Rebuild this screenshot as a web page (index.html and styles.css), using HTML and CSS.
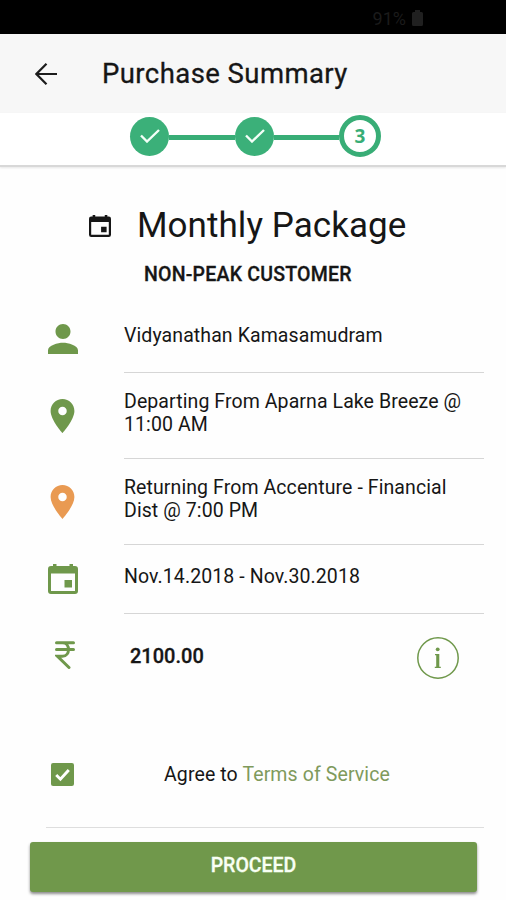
FILE: index.html
```
<!DOCTYPE html>
<html lang="en">
<head>
<meta charset="utf-8">
<title>Purchase Summary</title>
<link rel="stylesheet" href="styles.css">
</head>
<body>
<div class="status"><span class="status-level">91%</span>
  <svg class="battery" viewBox="0 0 11 16"><path d="M3 0h5v2h1.500a1.500 1.500 0 0 1 1.500 1.500V14.500a1.500 1.500 0 0 1-1.500 1.500h-8A1.500 1.500 0 0 1 0 14.500V3.500A1.500 1.500 0 0 1 1.500 2H3z"/></svg>
</div>
<header class="header">
  <svg class="back" viewBox="0 0 22 22"><path d="M11.500 0.800L1.400 11l10.100 10.200M1.400 11H22"/></svg>
  <h1 class="header-title">Purchase Summary</h1>
</header>
<nav class="stepper">
  <span class="step"><svg class="step-check" viewBox="0 0 20 14"><path d="M1 6.500L7 12.500L19 1"/></svg></span>
  <span class="bar"></span>
  <span class="step"><svg class="step-check" viewBox="0 0 20 14"><path d="M1 6.500L7 12.500L19 1"/></svg></span>
  <span class="bar bar-last"></span>
  <span class="step step-current">3</span>
</nav>
<main class="content">
  <div class="package">
    <svg class="package-icon" viewBox="0 0 30 30"><path fill-rule="evenodd" d="M5 0h3.500v2h13V0H25v2h2a3 3 0 0 1 3 3v22a3 3 0 0 1-3 3H3a3 3 0 0 1-3-3V5a3 3 0 0 1 3-3h2zM3 9.500V27h24V9.500zM16.500 16H24v7.500h-7.500z"/></svg>
    <h2 class="package-name">Monthly Package</h2>
  </div>
  <p class="customer">NON-PEAK CUSTOMER</p>
  <ul class="rows">
    <li class="row row-person">
      <span class="icon"><svg class="i30" viewBox="4 4 16 16"><path d="M12 12c2.210 0 4-1.790 4-4s-1.790-4-4-4-4 1.790-4 4 1.790 4 4 4zm0 2c-2.670 0-8 1.340-8 4v2h16v-2c0-2.660-5.330-4-8-4z"/></svg></span>
      <span class="text name">Vidyanathan Kamasamudram</span>
    </li>
    <li class="row row-place">
      <span class="icon"><svg class="pin" viewBox="5 2 14 20"><path d="M12 2C8.130 2 5 5.130 5 9c0 5.250 7 13 7 13s7-7.750 7-13c0-3.870-3.130-7-7-7zm0 9.500c-1.380 0-2.500-1.120-2.500-2.500s1.120-2.500 2.500-2.500 2.500 1.120 2.500 2.500-1.120 2.500-2.500 2.500z"/></svg></span>
      <span class="text depart">Departing From Aparna Lake Breeze @<br>11:00 AM</span>
    </li>
    <li class="row row-place">
      <span class="icon"><svg class="pin pin-return" viewBox="5 2 14 20"><path d="M12 2C8.130 2 5 5.130 5 9c0 5.250 7 13 7 13s7-7.750 7-13c0-3.870-3.130-7-7-7zm0 9.500c-1.380 0-2.500-1.120-2.500-2.500s1.120-2.500 2.500-2.500 2.500 1.120 2.500 2.500-1.120 2.500-2.500 2.500z"/></svg></span>
      <span class="text return">Returning From Accenture - Financial<br>Dist @ 7:00 PM</span>
    </li>
    <li class="row row-date">
      <span class="icon"><svg class="i30" viewBox="0 0 30 30"><path fill-rule="evenodd" d="M5 0h3.500v2h13V0H25v2h2a3 3 0 0 1 3 3v22a3 3 0 0 1-3 3H3a3 3 0 0 1-3-3V5a3 3 0 0 1 3-3h2zM3 9.500V27h24V9.500zM16.500 16H24v7.500h-7.500z"/></svg></span>
      <span class="text date">Nov.14.2018 - Nov.30.2018</span>
    </li>
  </ul>
  <div class="price">
    <svg class="rupee" viewBox="0 0 20 28"><path d="M1.500 1.800h17M1.500 8.500h17M2.500 1.800h5c8 0 8 13.500 0 13.500H2.500L14 26.500"/></svg>
    <span class="amount">2100.00</span>
    <svg class="info" viewBox="0 0 42 42"><circle class="info-ring" cx="21" cy="21" r="20.200"/><circle cx="20.700" cy="12.300" r="1.900"/><path d="M18 17h4.300v12.800h1.500v1.200h-6v-1.200h1.400V18.200H18z"/></svg>
  </div>
  <div class="agree">
    <svg class="checkbox" viewBox="0 0 22 22"><rect width="22" height="22" rx="2"/><path d="M5 11.500l4 4 8-8.800"/></svg>
    <span class="agree-text">Agree to <span class="terms">Terms of Service</span></span>
  </div>
  <button class="proceed">PROCEED</button>
</main>
</body>
</html>
```

FILE: styles.css
```
* { box-sizing: border-box; }
body { margin: 0; height: 900px; overflow: hidden; background: #fefefe; color: #161616; font-family: Roboto, sans-serif; }
h1, h2, p, ul { margin: 0; padding: 0; font-weight: 400; }
svg { display: block; flex: none; fill: #6f984b; }

.status { height: 34px; padding: 2px 83px 0 0; display: flex; align-items: center; justify-content: flex-end; gap: 6px; background: #000; color: #1b1b1b; font-size: 18px; }
.status .battery { width: 11px; height: 16px; fill: #202020; }

.header { height: 79px; display: flex; align-items: center; padding-left: 35px; background: #f7f7f7; }
.back { width: 22px; height: 22px; fill: none; stroke: #1c1c1c; stroke-width: 2.200; }
.header-title { margin-left: 45px; padding-top: 1px; font-size: 27.500px; line-height: 32px; letter-spacing: 0.430px; white-space: nowrap; -webkit-text-stroke: 0.300px #161616; }

.stepper { height: 54px; padding: 0 0 6px 130px; display: flex; align-items: center; background: #fff; border-bottom: 2px solid #d8d8d8; box-shadow: 0 1px 2px #e6e6e6; }
.step { width: 39px; height: 39px; flex: none; border-radius: 50%; background: #3bb079; display: flex; align-items: center; justify-content: center; }
.step-check { width: 20px; height: 14px; fill: none; stroke: #f4fff8; stroke-width: 2.400; }
.bar { width: 66px; height: 5px; margin-top: 3px; background: #38ad76; }
.bar-last { width: 65px; }
.step-current { width: 42px; height: 42px; border: 5px solid #38ad76; background: #fff; color: #38ad76; font: 700 19px "Open Sans", sans-serif; }

.content { padding: 33px 22px 0 46px; }
.package { height: 50px; display: flex; align-items: center; padding-left: 43px; }
.package-icon { width: 22px; height: 22px; margin-top: 2px; fill: #161616; }
.package-name { margin-left: 26px; padding-top: 1px; font-size: 35px; line-height: 42px; letter-spacing: 0.050px; white-space: nowrap; }
.customer { margin: 14px 0 0 98px; font-size: 19.500px; line-height: 22px; font-weight: 500; letter-spacing: 0.220px; -webkit-text-stroke: 0.300px #161616; white-space: nowrap; }

.rows { list-style: none; margin-top: 16px; }
.row { display: flex; }
.icon { width: 33px; margin-right: 45px; display: flex; justify-content: center; align-items: center; }
.i30 { width: 30px; height: 30px; }
.row-person .i30 { margin-top: 2px; }
.row-date .i30 { margin-top: -1px; }
.pin { width: 25px; height: 34px; }
.pin-return { fill: #e99a52; }
.text { flex: 1; border-bottom: 1px solid #d6d6d6; font-size: 19.500px; line-height: 22.500px; letter-spacing: 0.090px; white-space: nowrap; }
.row-person { height: 71px; }
.name { padding-top: 23px; }
.row-place { height: 86px; }
.depart, .return { padding-top: 18px; }
.row-date { height: 69px; }
.date { padding-top: 21px; }

.price { height: 88px; display: flex; align-items: center; padding: 0 25px 0 9px; }
.rupee { width: 20px; height: 28px; margin-top: -6px; fill: none; stroke: #6f984b; stroke-width: 3; stroke-linecap: round; }
.amount { margin: -4px 0 0 55px; font-size: 20px; font-weight: 500; -webkit-text-stroke: 0.300px #161616; }
.info { width: 42px; height: 42px; margin-left: auto; }
.info-ring { fill: none; stroke: #6f984b; stroke-width: 1.500; }

.agree { height: 126px; padding: 20px 0 0 5px; display: flex; align-items: center; border-bottom: 1px solid #dedede; }
.checkbox { width: 23px; height: 23px; }
.checkbox path { fill: none; stroke: #fff; stroke-width: 2.800; }
.agree-text { margin-left: 90px; font-size: 19.500px; letter-spacing: 0.110px; white-space: nowrap; }
.terms { color: #7f9a5c; }

.proceed { display: block; width: 447px; height: 50px; margin: 14px 0 0 -16px; padding: 0 0 3px; border: 0; border-radius: 3px; background: #70984b; color: #f8fff4; box-shadow: 0 2px 3px #8c8c8c; font: 500 19.500px Roboto, sans-serif; -webkit-text-stroke: 0.300px #f8fff4; }
```
